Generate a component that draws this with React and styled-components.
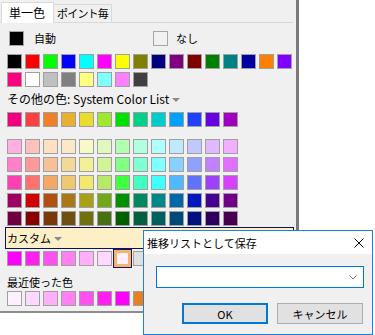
import React from 'react'
import styled, { createGlobalStyle } from 'styled-components'

const GlobalStyle = createGlobalStyle`
  html, body {
    margin: 0;
    padding: 0;
    background: #fff;
  }
  body {
    font-family: "Noto Sans CJK JP", "Noto Sans", sans-serif;
    color: #000;
  }
`

const basic1 = ['#000000', '#ff0000', '#00ff00', '#0000ff', '#00ffff', '#ff00ff', '#ffff00', '#808000', '#000080', '#800080', '#800000', '#008000', '#008080', '#0000a0', '#ff8000', '#8000ff']
const basic2 = ['#ff0080', '#ffffff', '#c0c0c0', '#808080', '#ffff80', '#80ffff', '#ff80ff', '#404040']
const system = ['#f0007f', '#ff4040', '#f08028', '#e8b030', '#e8dc30', '#a0e830', '#00e000', '#00d088', '#00cccc', '#00a0ff', '#2040ff', '#6a00e0', '#a000c0']
const grid = [
  ['#ffb0e0', '#ffc0c0', '#ffe0c0', '#fae8c8', '#f8f8c8', '#e0f8c0', '#b0ffb0', '#b0ffe0', '#b0ffff', '#c0e8ff', '#c0c8ff', '#e0b8ff', '#f0b0ff'],
  ['#ff80c8', '#ff9898', '#f8c098', '#f4d898', '#f4f098', '#d0f498', '#80ff80', '#80ffd0', '#80ffff', '#88d0ff', '#90a0ff', '#c080ff', '#e070ff'],
  ['#ff40b0', '#ff7070', '#f4a868', '#f0c870', '#f0e870', '#b8e868', '#40ff40', '#40ffc0', '#40ffff', '#50b8ff', '#6070ff', '#a040ff', '#d840ff'],
  ['#a00060', '#d00000', '#b05010', '#a87818', '#a8a018', '#70a818', '#009000', '#008860', '#008888', '#0068a8', '#0018c0', '#480090', '#700088'],
  ['#700040', '#880000', '#783808', '#705010', '#707010', '#487010', '#006000', '#006040', '#006060', '#004878', '#001080', '#300060', '#480050'],
]
const custom = ['#ff00ff', '#ff20f0', '#ff50f0', '#ff80f0', '#ffb0f8', '#ffd8ff', '#fff0ff', '#e0e0e0', '#e0e0e0']
const recent = ['#fff0ff', '#ffd8ff', '#ffb0f8', '#ff80f0', '#ff50f0', '#ff20f0', '#ff00ff', '#e88020', '#e0e0e0']

const Screen = styled.div`
  position: relative;
  width: 375px;
  height: 335px;
  overflow: hidden;
  background: #fff;
`

const Panel = styled.div`
  width: 296px;
  height: 311px;
  background: #f0f0f0;
  border-right: 3px solid #7a7a7a;
  border-bottom: 2px solid #8c8c8c;
`

const TabStrip = styled.div`
  display: flex;
  align-items: flex-end;
  height: 22px;
  margin-right: 3px;
  padding-left: 1px;
  border-bottom: 1px solid #d9d9d9;
`

const Tab = styled.div`
  display: flex;
  align-items: center;
  box-sizing: border-box;
  height: ${p => (p.$active ? 21 : 18)}px;
  margin-bottom: ${p => (p.$active ? -1 : 0)}px;
  padding: ${p => (p.$active ? '0 8px 0 7px' : '0 3px')};
  background: ${p => (p.$active ? '#fff' : '#f0f0f0')};
  border: 1px solid #d9d9d9;
  border-bottom: none;
  border-left: ${p => (p.$active ? '1px solid #d9d9d9' : 'none')};
  font-size: ${p => (p.$active ? 12 : 11)}px;
  letter-spacing: ${p => (p.$active ? 0 : -0.8)}px;
  line-height: 1;
`

const Page = styled.div`
  padding-left: 7px;
`

const AutoRow = styled.div`
  display: flex;
  align-items: center;
  height: 15px;
  margin-top: 8px;
`

const AutoOption = styled.div`
  display: flex;
  align-items: center;
  width: ${p => p.$width || 'auto'};
`

const CheckBox = styled.div`
  box-sizing: border-box;
  width: 15px;
  height: 15px;
  margin-left: ${p => p.$indent || 0}px;
  background: ${p => p.$color};
  border: 1px solid #a6a6a6;
`

const OptionLabel = styled.span`
  margin-left: ${p => p.$gap}px;
  font-size: 11px;
  line-height: 15px;
`

const SwatchRow = styled.div`
  display: flex;
  gap: 3px;
  margin-top: ${p => p.$mt}px;
`

const Swatch = styled.div`
  box-sizing: border-box;
  flex: none;
  width: 15px;
  height: 15px;
  background: ${p => p.$color};
  border: ${p => (p.$selected ? '2px solid #f4b46c' : '1px solid #a0a0a0')};
  box-shadow: ${p => (p.$selected ? '0 0 0 1px #f4b46c, 0 0 0 2px #15156a' : 'none')};
`

const SectionLabel = styled.div`
  display: flex;
  align-items: center;
  height: 16px;
  margin-top: ${p => p.$mt}px;
  font-size: ${p => p.$size || 11}px;
  line-height: 16px;
  white-space: nowrap;
`

const Arrow = styled.span`
  display: inline-block;
  width: 0;
  height: 0;
  margin-left: 3px;
  margin-top: 2px;
  border-left: 4px solid transparent;
  border-right: 4px solid transparent;
  border-top: 4px solid #8a8a8a;
`

const CustomHeader = styled.div`
  display: flex;
  align-items: center;
  box-sizing: border-box;
  width: 289px;
  height: 22px;
  margin: 1px 0 0 -2px;
  padding-left: 1px;
  background: #fdefc6;
  border: 1px solid #101060;
  font-size: 11px;
`

const Dialog = styled.div`
  position: absolute;
  left: 143px;
  top: 230px;
  box-sizing: border-box;
  width: 230px;
  height: 105px;
  background: #f0f0f0;
  border: 1px solid #1883d7;
  font-family: "Noto Sans CJK JP", "Noto Sans", sans-serif;
`

const TitleBar = styled.div`
  display: flex;
  align-items: center;
  justify-content: space-between;
  height: 23px;
  padding: 0 8px 0 3px;
  background: #fff;
  font-size: 11px;
`

const DialogBody = styled.div`
  padding: 12px 8px 0 12px;
`

const Combo = styled.div`
  display: flex;
  align-items: center;
  justify-content: flex-end;
  box-sizing: border-box;
  width: 208px;
  height: 22px;
  padding-right: 6px;
  background: #fff;
  border: 1px solid #0078d7;
`

const ButtonRow = styled.div`
  display: flex;
  justify-content: flex-end;
  gap: 9px;
  margin-top: 15px;
  padding-right: 1px;
`

const Button = styled.div`
  display: flex;
  align-items: center;
  justify-content: center;
  box-sizing: border-box;
  width: ${p => p.$w}px;
  height: 21px;
  background: #e1e1e1;
  border: ${p => (p.$default ? '2px solid #0078d7' : '1px solid #adadad')};
  font-size: 11px;
`

const Swatches = ({ colors, mt, selected }) => (
  <SwatchRow $mt={mt}>
    {colors.map((c, i) => (
      <Swatch key={i} $color={c} $selected={i === selected} />
    ))}
  </SwatchRow>
)

const App = () => (
  <Screen>
    <GlobalStyle />
    <Panel>
      <TabStrip>
        <Tab $active>単一色</Tab>
        <Tab>ポイント毎</Tab>
      </TabStrip>
      <Page>
        <AutoRow>
          <AutoOption $width="146px">
            <CheckBox $color="#000" $indent={2} />
            <OptionLabel $gap={10}>自動</OptionLabel>
          </AutoOption>
          <AutoOption>
            <CheckBox $color="#f0f0f0" />
            <OptionLabel $gap={8}>なし</OptionLabel>
          </AutoOption>
        </AutoRow>
        <Swatches colors={basic1} mt={8} />
        <Swatches colors={basic2} mt={3} />
        <SectionLabel $mt={4} $size={12}>
          その他の色: System Color List
          <Arrow />
        </SectionLabel>
        <Swatches colors={system} mt={5} />
        {grid.map((row, i) => (
          <Swatches key={i} colors={row} mt={i === 0 ? 12 : 3} />
        ))}
        <CustomHeader>
          カスタム
          <Arrow />
        </CustomHeader>
        <Swatches colors={custom} mt={2} selected={6} />
        <SectionLabel $mt={8}>最近使った色</SectionLabel>
        <Swatches colors={recent} mt={1} />
      </Page>
    </Panel>

    <Dialog>
      <TitleBar>
        <span>推移リストとして保存</span>
        <svg width="10" height="10" viewBox="0 0 10 10">
          <path d="M0.5 0.5L9.5 9.5M9.5 0.5L0.5 9.5" stroke="#000" strokeWidth="1" fill="none" />
        </svg>
      </TitleBar>
      <DialogBody>
        <Combo>
          <svg width="8" height="5" viewBox="0 0 8 5">
            <path d="M0.5 0.5L4 4L7.5 0.5" stroke="#7a7a7a" strokeWidth="1" fill="none" />
          </svg>
        </Combo>
        <ButtonRow>
          <Button $w={86} $default>OK</Button>
          <Button $w={86}>キャンセル</Button>
        </ButtonRow>
      </DialogBody>
    </Dialog>
  </Screen>
)

export default App
